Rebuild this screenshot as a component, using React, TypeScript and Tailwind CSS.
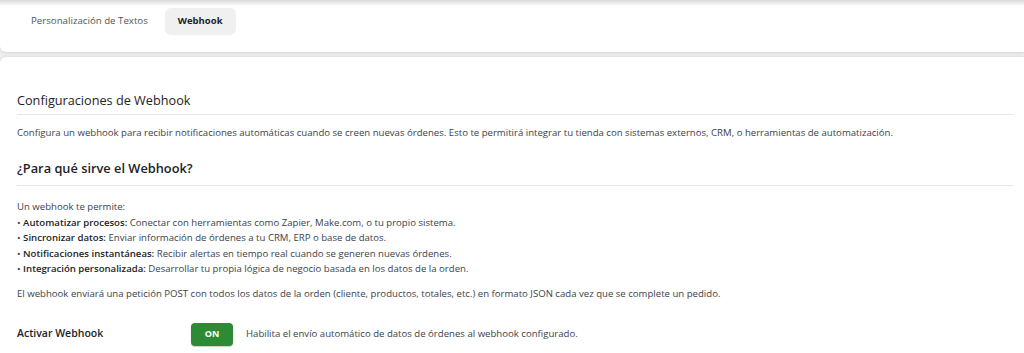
import React from 'react';

const FONT = { fontFamily: '"Segoe UI", "Open Sans", sans-serif' };

const USES = [
  { label: 'Automatizar procesos:', text: 'Conectar con herramientas como Zapier, Make.com, o tu propio sistema.' },
  { label: 'Sincronizar datos:', text: 'Enviar información de órdenes a tu CRM, ERP o base de datos.' },
  { label: 'Notificaciones instantáneas:', text: 'Recibir alertas en tiempo real cuando se generen nuevas órdenes.' },
  { label: 'Integración personalizada:', text: 'Desarrollar tu propia lógica de negocio basada en los datos de la orden.' },
];

export default function App() {
  return (
    <div className="min-h-screen bg-[#f0f0f1] overflow-hidden" style={FONT}>
      {/* Tabs card */}
      <div className="bg-white rounded-bl-md shadow-[0_1px_3px_rgba(0,0,0,0.12)]">
        <div className="h-[6px] bg-gradient-to-b from-[#d8d8d8] to-white" />
        <div className="flex gap-[3px] px-[17px] pt-[2px] pb-[17px]">
          <button className="px-[14px] h-[27px] rounded-md text-[9.7px] font-medium text-[#50575e]">
            Personalización de Textos
          </button>
          <button className="px-[13px] h-[27px] rounded-md bg-[#f0f0f1] text-[9.5px] font-bold text-[#1d2327]">
            Webhook
          </button>
        </div>
      </div>

      {/* Webhook settings card */}
      <div className="mt-[5px] bg-white rounded-tl-md shadow-[0_-1px_3px_rgba(0,0,0,0.08)] pl-[17px] pr-[11px] pt-[33px] pb-6 text-[9.6px] text-[#3c434a]">
        <h2 className="text-[12.7px] leading-[20px] font-medium text-[#1d2327] pb-[4px] border-b border-[#e6e7e8]">
          Configuraciones de Webhook
        </h2>
        <p className="mt-[10px] leading-[16px]">
          Configura un webhook para recibir notificaciones automáticas cuando se creen nuevas órdenes. Esto te permitirá integrar tu tienda con sistemas externos, CRM, o herramientas de automatización.
        </p>

        <h3 className="mt-[15px] text-[12.8px] leading-[24px] font-semibold text-[#1d2327] pb-[5px] border-b border-[#e6e7e8]">
          ¿Para qué sirve el Webhook?
        </h3>
        <div className="mt-[13px] leading-[15.5px]">
          <p>Un webhook te permite:</p>
          {USES.map(u => (
            <p key={u.label}>
              • <strong className="font-semibold text-[#1d2327]">{u.label}</strong> {u.text}
            </p>
          ))}
        </div>
        <p className="mt-[9px] leading-[16px]">
          El webhook enviará una petición POST con todos los datos de la orden (cliente, productos, totales, etc.) en formato JSON cada vez que se complete un pedido.
        </p>

        <div className="mt-[21px] flex items-center">
          <div className="w-[174px] text-[10.5px] font-semibold text-[#1d2327]">Activar Webhook</div>
          <button className="w-[42px] h-[23px] rounded-[4px] bg-[#2e8b35] text-white text-[9px] font-bold shadow-[0_1px_1px_rgba(0,0,0,0.2)]">
            ON
          </button>
          <span className="ml-[13px]">Habilita el envío automático de datos de órdenes al webhook configurado.</span>
        </div>
      </div>
    </div>
  );
}
